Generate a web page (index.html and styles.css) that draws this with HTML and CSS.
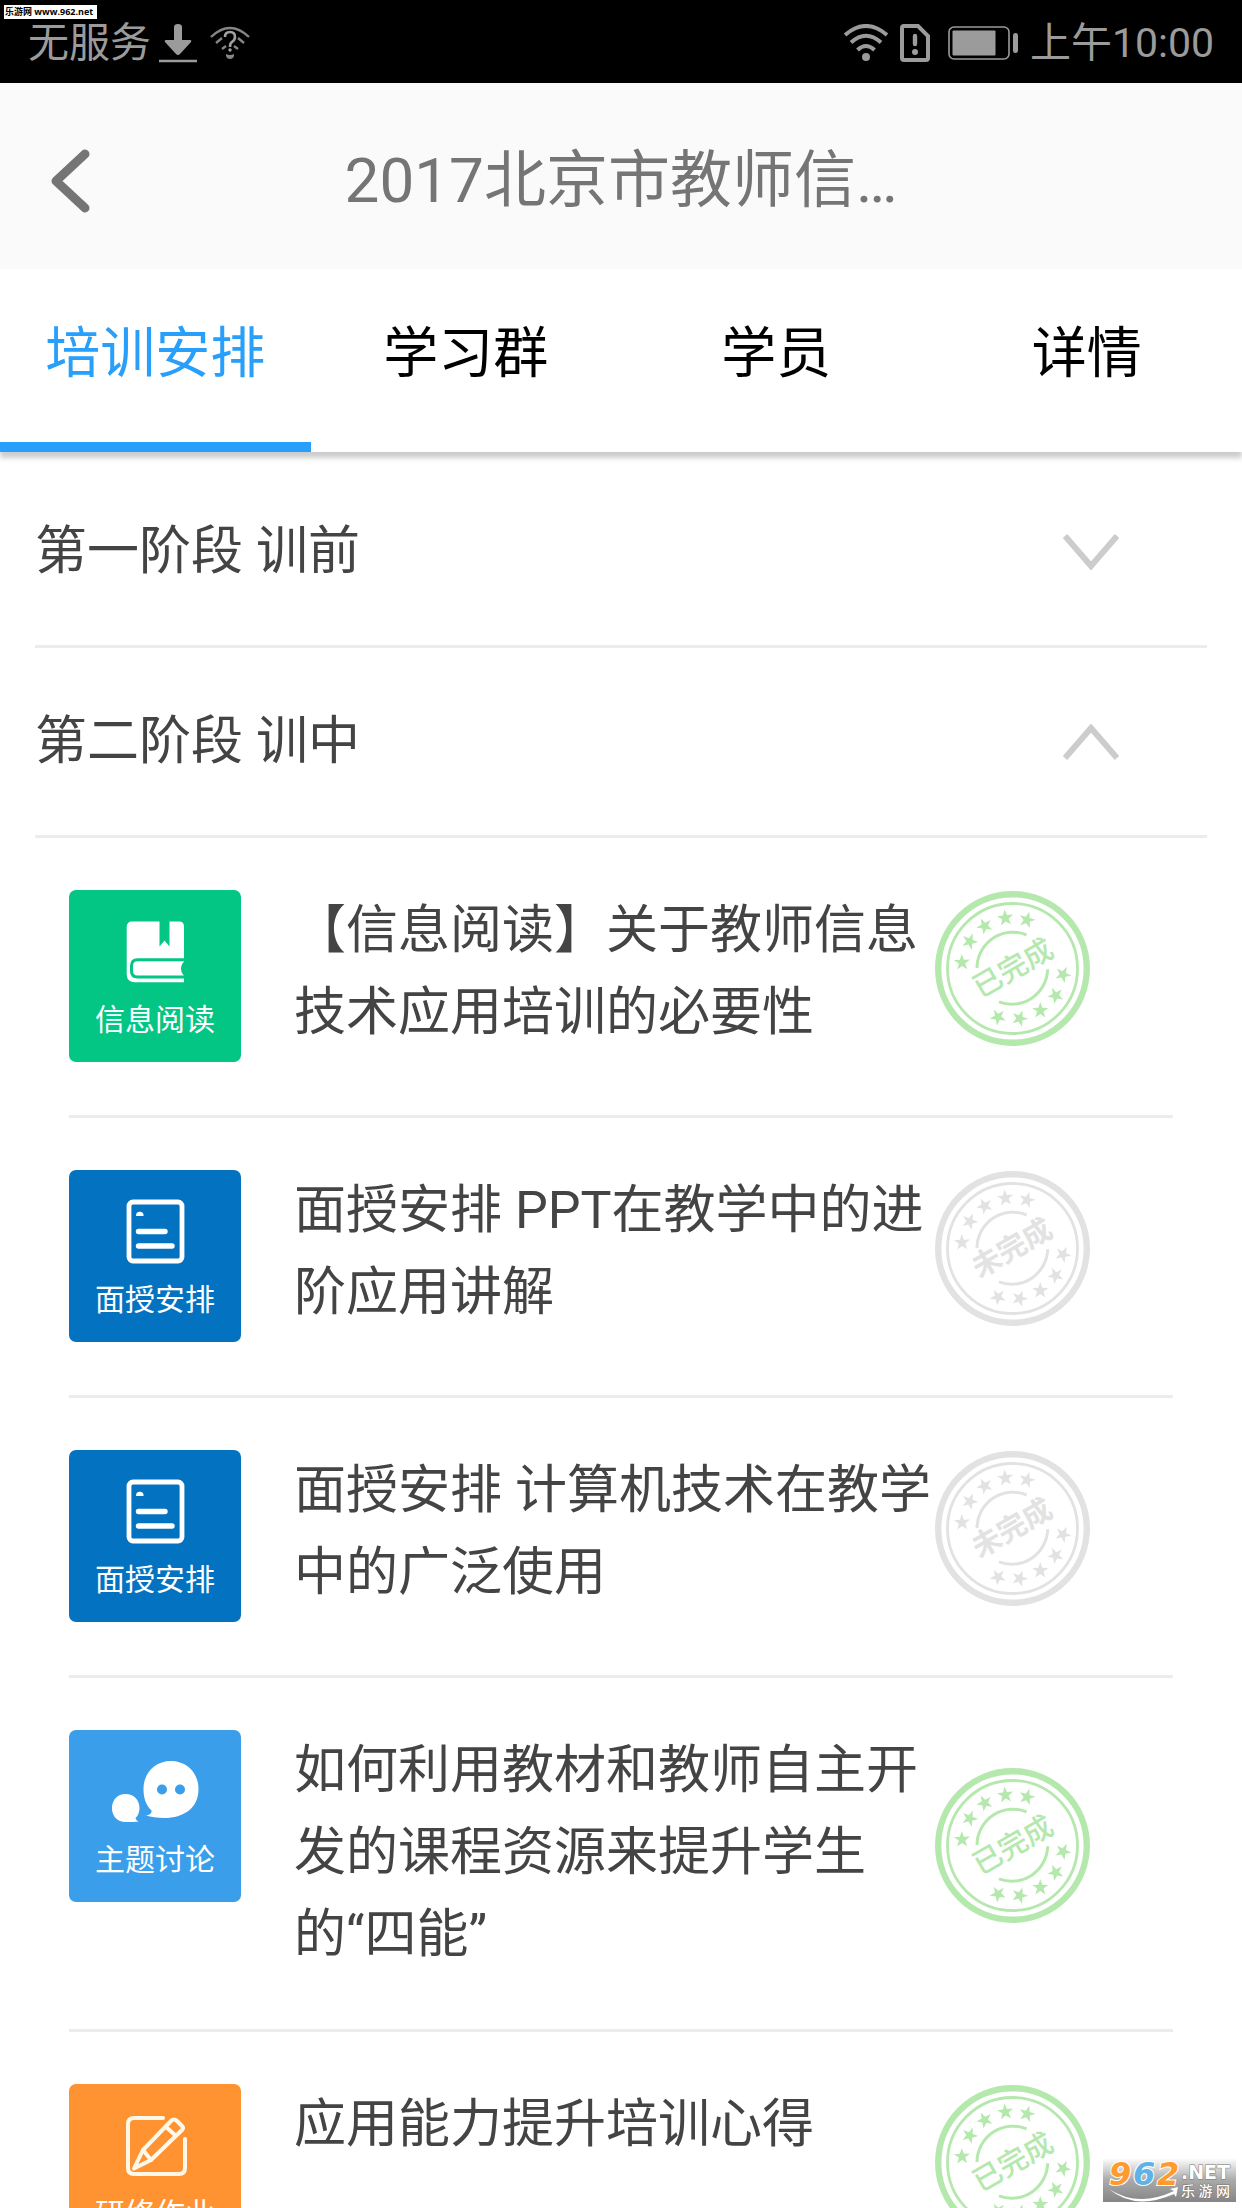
FILE: index.html
```html
<!DOCTYPE html>
<html lang="zh-CN">
<head>
    <meta charset="UTF-8">
    <meta name="viewport" content="width=device-width, initial-scale=1.0">
    <title>2017北京市教师信息技术培训</title>
    <link rel="stylesheet" href="styles.css">
</head>
<body>
    <!-- shared shapes -->
    <svg class="defs" width="0" height="0" aria-hidden="true">
        <symbol id="star" viewBox="-10 -10 20 20">
            <path d="M0-8.5 2-2.7 8.1-2.6 3.2 1 5 6.9 0 3.4-5 6.9-3.2 1-8.1-2.6-2-2.7Z"/>
        </symbol>
        <symbol id="stamp" viewBox="0 0 155 155">
            <g fill="none" stroke="currentColor">
                <circle cx="77.5" cy="77.5" r="74.3" stroke-width="6.4"/>
                <circle cx="77.5" cy="77.5" r="65" stroke-width="2.8"/>
                <path d="M42 77A36 36 0 0 1 91.5 43.8M112.7 78.3A36 36 0 0 1 64 110.9" stroke-width="3"/>
            </g>
            <g fill="currentColor">
                <use href="#star" x="-10" y="-10" width="20" height="20" transform="translate(70.3 27) rotate(-6)"/>
                <use href="#star" x="-10" y="-10" width="20" height="20" transform="translate(92 29) rotate(16)"/>
                <use href="#star" x="-10" y="-10" width="20" height="20" transform="translate(49.7 35) rotate(-28)"/>
                <use href="#star" x="-10" y="-10" width="20" height="20" transform="translate(34.7 50.5) rotate(-50)"/>
                <use href="#star" x="-10" y="-10" width="20" height="20" transform="translate(27 71.5) rotate(-2)"/>
                <use href="#star" x="-10" y="-10" width="20" height="20" transform="translate(128 83.5) rotate(26)"/>
                <use href="#star" x="-10" y="-10" width="20" height="20" transform="translate(120.7 104.5) rotate(46)"/>
                <use href="#star" x="-10" y="-10" width="20" height="20" transform="translate(105.3 119.5) rotate(0)"/>
                <use href="#star" x="-10" y="-10" width="20" height="20" transform="translate(84.7 127.5) rotate(20)"/>
                <use href="#star" x="-10" y="-10" width="20" height="20" transform="translate(63 126) rotate(42)"/>
            </g>
        </symbol>
        <symbol id="icon-doc" viewBox="0 0 172 104">
            <rect x="60" y="32" width="53" height="59" rx="4" fill="none" stroke="#fff" stroke-width="4.8"/>
            <path d="M67 46a3.8 4.2 0 0 1 7.6 0z" fill="#fff"/>
            <path d="M69.5 61.5H96M69.5 76H103" stroke="#fff" stroke-width="5.4" stroke-linecap="round"/>
        </symbol>
    </svg>

    <div class="screen">
        <div class="status-bar">
            <div class="status-group">
                <span>无服务</span>
                <svg width="38" height="40" viewBox="0 0 38 40">
                    <path d="M15 4q0-3 4-3t4 3V17h8q2 0 1 2L21 31q-2 2-4 0L6 19q-1-2 1-2h8z" fill="#9b9b9b"/>
                    <path d="M0 38H38" stroke="#9b9b9b" stroke-width="2.4"/>
                </svg>
                <svg class="icon-wifi-unknown" width="40" height="34" viewBox="0 0 40 34" fill="none" stroke="#858585">
                    <path d="M1 11Q20-7 39 11" stroke-width="2.4"/>
                    <path d="M6 17l6-5M34 17l-6-5M12 23l4-3M28 23l-4-3" stroke-width="2.4"/>
                    <path d="M15 11q0-5 5-5t5 5q0 3-3 5-2 1-2 5" stroke="#a0a0a0" stroke-width="2.6"/>
                    <circle cx="20" cy="24" r="1.7" fill="#a0a0a0" stroke="none"/>
                    <path d="M16 28q4 2 8 0v2q-1 3-4 3t-4-3z" fill="#858585" stroke="none"/>
                </svg>
            </div>
            <div class="status-group">
                <svg width="44" height="38" viewBox="0 0 44 38" fill="none" stroke="#9b9b9b" stroke-width="4">
                    <path d="M1 11Q22-7 43 11M7 18.5Q22 5 37 18.5M13.500 26Q22 18 30.500 26"/>
                    <circle cx="22" cy="33" r="4" fill="#9b9b9b" stroke="none"/>
                </svg>
                <svg class="icon-sim" width="30" height="38" viewBox="0 0 30 38">
                    <path d="M4 2H18L28 12V34q0 2-2 2H4q-2 0-2-2V4q0-2 2-2z" fill="none" stroke="#9b9b9b" stroke-width="4"/>
                    <path d="M15 12V20" stroke="#9b9b9b" stroke-width="4.4" stroke-linecap="round"/>
                    <circle cx="15" cy="28" r="3" fill="#9b9b9b"/>
                </svg>
                <svg class="icon-battery" width="70" height="34" viewBox="0 0 70 34">
                    <rect x="1" y="1" width="60" height="32" rx="5" fill="none" stroke="#9b9b9b" stroke-width="1.6"/>
                    <rect x="4.500" y="4.500" width="43" height="25" rx="1" fill="#9b9b9b"/>
                    <rect x="65" y="7" width="5" height="20" rx="2.5" fill="#9b9b9b"/>
                </svg>
                <span>上午10:00</span>
            </div>
            <div class="site-tag">乐游网 www.962.net</div>
        </div>

        <header class="header">
            <button class="back" aria-label="返回">
                <svg width="40" height="64" viewBox="0 0 40 64">
                    <path d="M35 5L6 32 35 59" fill="none" stroke="#757575" stroke-width="9" stroke-linecap="round" stroke-linejoin="round"/>
                </svg>
            </button>
            <h1>2017北京市教师信…</h1>
        </header>

        <nav class="tabs">
            <a href="#plan" class="tab active">培训安排</a>
            <a href="#group" class="tab">学习群</a>
            <a href="#members" class="tab">学员</a>
            <a href="#detail" class="tab">详情</a>
        </nav>

        <main class="content" id="plan">
            <button class="stage" aria-expanded="false">
                <span>第一阶段 训前</span>
                <svg width="56" height="36" viewBox="0 0 56 36">
                    <path d="M2 2L28 32 54 2" fill="none" stroke="#ccc" stroke-width="6"/>
                </svg>
            </button>
            <button class="stage" aria-expanded="true">
                <span>第二阶段 训中</span>
                <svg width="56" height="36" viewBox="0 0 56 36">
                    <path d="M2 34L28 4 54 34" fill="none" stroke="#ccc" stroke-width="6"/>
                </svg>
            </button>

            <ul class="tasks">
                <li class="task">
                    <div class="tile reading">
                        <svg width="172" height="104" viewBox="0 0 172 104">
                            <path d="M63 31.5H90.500V56.500L95.500 50.500 100.500 56.500V31.500H110q5 0 5 5V92.300H66q-8.300 0-8.300-8.300V37q0-5.500 5.300-5.500z" fill="#fff"/>
                            <path d="M116 69.800H68.500q-6 0-6 6v5q0 6.300 6 6.300H116" fill="none" stroke="#04c684" stroke-width="3"/>
                            <path d="M116 70.500Q108 78.500 116 87z" fill="#04c684"/>
                        </svg>
                        <span>信息阅读</span>
                    </div>
                    <a href="#task1" class="task-title">【信息阅读】关于教师信息技术应用培训的必要性</a>
                    <svg class="stamp done" width="155" height="155" viewBox="0 0 155 155">
                        <use href="#stamp"/>
                        <text x="0" y="10" transform="translate(78 77) rotate(-30)">已完成</text>
                    </svg>
                </li>
                <li class="task">
                    <div class="tile lecture">
                        <svg width="172" height="104"><use href="#icon-doc"/></svg>
                        <span>面授安排</span>
                    </div>
                    <a href="#task2" class="task-title">面授安排 PPT在教学中的进阶应用讲解</a>
                    <svg class="stamp undone" width="155" height="155" viewBox="0 0 155 155">
                        <use href="#stamp"/>
                        <text x="0" y="10" transform="translate(77 77) rotate(-30)">未完成</text>
                    </svg>
                </li>
                <li class="task">
                    <div class="tile lecture">
                        <svg width="172" height="104"><use href="#icon-doc"/></svg>
                        <span>面授安排</span>
                    </div>
                    <a href="#task3" class="task-title">面授安排 计算机技术在教学中的广泛使用</a>
                    <svg class="stamp undone" width="155" height="155" viewBox="0 0 155 155">
                        <use href="#stamp"/>
                        <text x="0" y="10" transform="translate(77 77) rotate(-30)">未完成</text>
                    </svg>
                </li>
                <li class="task">
                    <div class="tile topic">
                        <svg width="172" height="104" viewBox="0 0 172 104">
                            <path d="M102 31C118 31 129.500 43 129.500 59 129.500 78 115 88 95 88 88 88 82 87 77 85.500 81 85 83 83 82.500 80.500 77 75.500 74.500 68 74.500 59 74.500 43 86 31 102 31z" fill="#fff"/>
                            <circle cx="93" cy="59.500" r="5" fill="#3a9eeb"/>
                            <circle cx="111" cy="59.500" r="5" fill="#3a9eeb"/>
                            <path d="M56.500 64C65 64 70.500 70 70.500 78 70.500 82 69 86 66.500 88 67 90 68 91 70 91.500 66 92 62 92 57 92 48 92 43 86 43 78 43 70 48.500 64 56.500 64z" fill="#fff"/>
                        </svg>
                        <span>主题讨论</span>
                    </div>
                    <a href="#task4" class="task-title">如何利用教材和教师自主开发的课程资源来提升学生<br>的“四能”</a>
                    <svg class="stamp done" width="155" height="155" viewBox="0 0 155 155">
                        <use href="#stamp"/>
                        <text x="0" y="10" transform="translate(78 77) rotate(-30)">已完成</text>
                    </svg>
                </li>
                <li class="task">
                    <div class="tile homework">
                        <svg width="172" height="104" viewBox="0 0 172 104" fill="none" stroke="#fff8e8" stroke-width="4" stroke-linecap="round" stroke-linejoin="round">
                            <path d="M94 34H65q-6 0-6 6V84q0 6 6 6H110q6 0 6-6V55"/>
                            <path d="M74 66L102 37q3-3 6 0L113 42q2 2 0 4L82 76 65 84.500z"/>
                            <path d="M97 43L106 51M74 66L82 76"/>
                        </svg>
                        <span>研修作业</span>
                    </div>
                    <a href="#task5" class="task-title">应用能力提升培训心得</a>
                    <svg class="stamp done" width="155" height="155" viewBox="0 0 155 155">
                        <use href="#stamp"/>
                        <text x="0" y="10" transform="translate(78 77) rotate(-30)">已完成</text>
                    </svg>
                </li>
            </ul>
        </main>

        <div class="site-logo">
            <svg width="133" height="44" viewBox="0 0 133 44">
                <path d="M6 31Q35 50 71 33L67 31 75 29 73 39 71 36Q32 53 6 31z" fill="#fff"/>
                <g class="logo-number">
                    <text x="6" y="27" fill="#ff9a2e">9</text>
                    <text x="30" y="27" fill="#5fb1e6">6</text>
                    <text x="54" y="27" fill="#ff9a2e">2</text>
                </g>
                <text class="logo-net" x="78" y="21">.NET</text>
                <text class="logo-name" x="78" y="38">乐 游 网</text>
            </svg>
        </div>
    </div>
</body>
</html>
```

FILE: styles.css
```css
* {
    box-sizing: border-box;
}

body {
    margin: 0;
    font-family: Roboto, "Noto Sans CJK SC", sans-serif;
    background-color: #fff;
    color: #444;
}

button {
    font-family: inherit;
    background: none;
    border: none;
    padding: 0;
    cursor: pointer;
}

a {
    color: inherit;
    text-decoration: none;
}

svg {
    display: block;
    flex-shrink: 0;
}

.defs {
    position: absolute;
}

.screen {
    position: relative;
    display: flex;
    flex-direction: column;
    height: 100vh;
    overflow: hidden;
}

/* status bar */
.status-bar {
    position: relative;
    display: flex;
    flex-shrink: 0;
    justify-content: space-between;
    align-items: center;
    height: 83px;
    padding: 2px 28px 0;
    background-color: #000;
    color: #9b9b9b;
    font-size: 41px;
    line-height: 60px;
}

.status-group {
    display: flex;
    align-items: center;
}

.status-group span:first-child {
    margin-right: 8px;
}

.icon-wifi-unknown {
    margin-left: 13px;
}

.icon-sim {
    margin-left: 12px;
}

.icon-battery {
    margin: 0 12px 0 18px;
}

.site-tag {
    position: absolute;
    top: 5px;
    left: 4px;
    height: 14px;
    padding: 0 4px 0 1px;
    background-color: #fff;
    color: #000;
    font-family: "Open Sans", "Noto Sans CJK SC", sans-serif;
    font-size: 9px;
    font-weight: bold;
    line-height: 14px;
}

/* header */
.header {
    display: grid;
    grid-template-columns: 100px 1fr 100px;
    flex-shrink: 0;
    align-items: center;
    height: 186px;
    padding-top: 10px;
    background-color: #fafafa;
}

.back {
    padding-left: 50px;
}

.header h1 {
    margin: 0;
    color: #757575;
    font-size: 62px;
    font-weight: normal;
    line-height: 90px;
    text-align: center;
}

/* tabs */
.tabs {
    display: flex;
    flex-shrink: 0;
    height: 183px;
    box-shadow: 0 6px 5px rgba(0, 0, 0, 0.2);
}

.tab {
    flex: 1;
    padding-top: 44px;
    border-bottom: 10px solid transparent;
    color: #000;
    font-size: 55px;
    line-height: 80px;
    text-align: center;
}

.tab.active {
    color: #279ffb;
    border-bottom-color: #279ffb;
}

/* stages */
.content {
    flex: 1;
    min-height: 0;
    padding: 6px 35px 0;
    overflow: hidden;
}

.stage {
    display: flex;
    justify-content: space-between;
    align-items: center;
    width: 100%;
    height: 190px;
    padding-right: 88px;
    border-bottom: 3px solid #ececec;
    color: #444;
    font-size: 52px;
    line-height: 82px;
}

/* tasks */
.tasks {
    margin: 0;
    padding: 0 34px;
    list-style: none;
}

.task {
    display: flex;
    align-items: center;
    padding: 52px 83px 53px 0;
    border-bottom: 3px solid #ececec;
}

.tile {
    align-self: flex-start;
    width: 172px;
    height: 172px;
    flex-shrink: 0;
    border-radius: 7px;
    color: #fff;
    font-size: 30px;
    line-height: 52px;
    text-align: center;
}

.reading {
    background-color: #04c684;
}

.lecture {
    background-color: #0373c1;
}

.topic {
    background-color: #3a9eeb;
}

.homework {
    background-color: #ff9332;
}

.task-title {
    flex: 1;
    align-self: flex-start;
    margin-left: 53px;
    font-size: 52px;
    line-height: 82px;
}

.stamp {
    box-sizing: content-box;
    padding-bottom: 16px;
}

.stamp text {
    fill: currentColor;
    font-size: 29px;
    font-weight: 500;
    text-anchor: middle;
}

.done {
    color: #b5e8ad;
}

.undone {
    color: #e2e2e2;
}

.undone text {
    font-weight: bold;
}

/* site logo in the corner */
.site-logo {
    position: absolute;
    right: 6px;
    bottom: 6px;
    background: linear-gradient(#fff, #aaa 50%, #858585);
}

.logo-number {
    font-family: "DejaVu Sans", sans-serif;
    font-size: 32px;
    font-style: italic;
    font-weight: bold;
    stroke: #fff;
    stroke-width: 2px;
    paint-order: stroke;
}

.logo-net {
    fill: #fff;
    font-family: "DejaVu Sans", sans-serif;
    font-size: 19px;
    font-weight: bold;
    stroke: #777;
    stroke-width: 1px;
    paint-order: stroke;
}

.logo-name {
    fill: #fff;
    font-size: 14px;
    font-weight: 500;
    stroke: #777;
    stroke-width: 1px;
    paint-order: stroke;
}
```
